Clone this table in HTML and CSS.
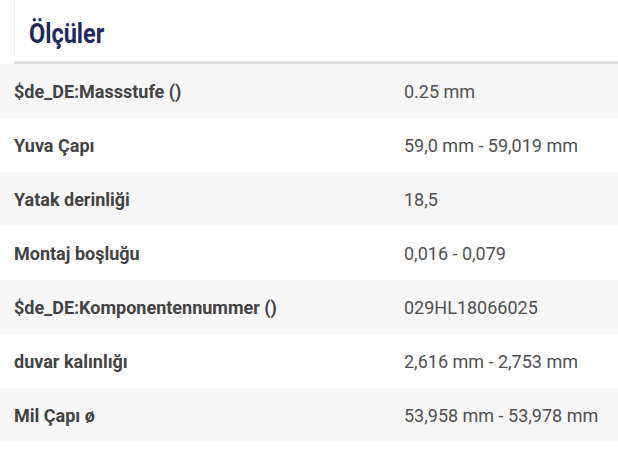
FILE: index.html
```html
<!DOCTYPE html>
<html lang="tr">
<head>
<meta charset="utf-8">
<title>Ölçüler</title>
<link rel="stylesheet" href="styles.css">
</head>
<body>
<section class="specs">
  <div class="specs-head"><h2 class="specs-title">Ölçüler</h2></div>
  <div class="specs-table">
    <div class="row"><div class="label">$de_DE:Massstufe ()</div><div class="value">0.25 mm</div></div>
    <div class="row"><div class="label">Yuva Çapı</div><div class="value">59,0 mm - 59,019 mm</div></div>
    <div class="row"><div class="label">Yatak derinliği</div><div class="value">18,5</div></div>
    <div class="row"><div class="label">Montaj boşluğu</div><div class="value">0,016 - 0,079</div></div>
    <div class="row"><div class="label">$de_DE:Komponentennummer ()</div><div class="value">029HL18066025</div></div>
    <div class="row"><div class="label">duvar kalınlığı</div><div class="value">2,616 mm - 2,753 mm</div></div>
    <div class="row"><div class="label">Mil Çapı ø</div><div class="value">53,958 mm - 53,978 mm</div></div>
  </div>
</section>
</body>
</html>
```
FILE: styles.css
```css
html, body {
  margin: 0;
  padding: 0;
  background: #ffffff;
}
body {
  font-family: Roboto, "Liberation Sans", sans-serif;
  width: 618px;
}
.specs-head {
  margin-left: 14px;
  border-left: 1px solid #f2f2f2;
  border-bottom: 3px solid #dedede;
  display: flex;
  align-items: center;
  box-sizing: border-box;
  height: 64px;
  padding-left: 14px;
  padding-top: 5px;
}
.specs-title {
  margin: 0;
  font-size: 28px;
  font-weight: 700;
  color: #1d2a5b;
  transform: scaleX(0.84);
  transform-origin: left center;
}
.specs-table {
  display: flex;
  flex-direction: column;
}
.row {
  display: grid;
  grid-template-columns: 390px 1fr;
  height: 54px;
  align-items: center;
  padding-left: 14px;
}
.row:nth-child(odd) {
  background: #f7f7f7;
}
.label {
  font-size: 18px;
  font-weight: 700;
  color: #434343;
}
.value {
  font-size: 18px;
  font-weight: 400;
  color: #505050;
}
```
